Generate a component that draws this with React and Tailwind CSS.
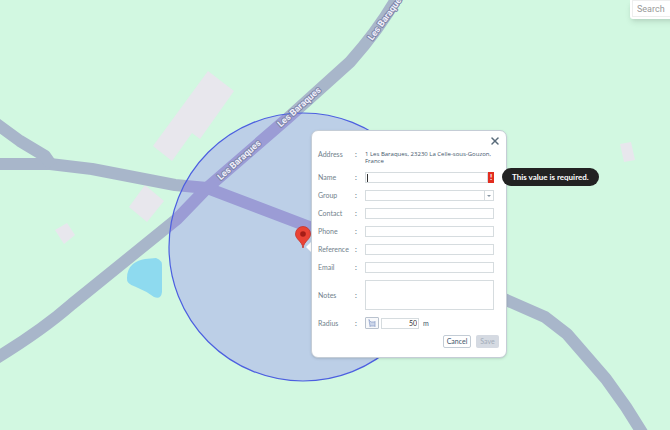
import React, { useState } from 'react';
import { X } from 'lucide-react';

const roads = [
    { d: 'M-10 164 H30 L50 164 L92 169 L175 185 L207 188 L320 231 C390 265 450 284 504 299 L545 317 L567 334 L606 379 L626 407 L648 442', width: 12 },
    { d: 'M-10 119 L20 141 L45 156 L52 166', width: 12 },
    { d: 'M-10 362 Q40 332 72 304 L177 219 L207 188 L289 117 L350 62 Q382 26 400 -8', width: 12 },
];

const buildings = [
    '208,71 234,91 200,139 192,133 172,161 153,146',
    '145,185 164,201 147,222 129,207',
    '67,223 75,235 64,244 55,230',
    '620,144 631,142 635,160 624,162',
];

const roadLabels = [
    { x: 239, y: 160, angle: -42 },
    { x: 299, y: 107, angle: -42 },
    { x: 386, y: 17, angle: -54 },
];

const MapCanvas = () => (
    <svg
        viewBox="0 0 670 430"
        preserveAspectRatio="xMidYMid slice"
        className="absolute inset-0 w-full h-full font-['Roboto',sans-serif]"
    >
        <rect width="670" height="430" fill="#d2f8e1" />
        {buildings.map((points) => (
            <polygon key={points} points={points} fill="#e8e7ed" />
        ))}
        {/* Pond */}
        <path d="M127 278 Q127 269 133 264 Q138 260 145 259 L156 258 Q163 260 162 268 L162 292 Q161 300 154 297 Q146 291 136 287 Q126 284 127 278 Z" fill="#8edaef" />
        {roads.map((road) => (
            <path key={road.d} d={road.d} fill="none" stroke="#a8b6ca" strokeWidth={road.width} strokeLinejoin="round" />
        ))}
        {/* Geofence */}
        <circle cx="303" cy="247" r="134" fill="#6e3eff" fillOpacity="0.22" stroke="#4c5fe0" strokeWidth="1.2" />
        {roadLabels.map(({ x, y, angle }) => (
            <text
                key={x}
                transform={`translate(${x} ${y}) rotate(${angle})`}
                textAnchor="middle"
                dominantBaseline="central"
                fontSize="9"
                fontWeight="700"
                fill="#f0effa"
                stroke="#7c84a8"
                strokeWidth="2"
                strokeLinejoin="round"
                paintOrder="stroke"
            >
                Les Baraques
            </text>
        ))}
        {/* Popup pointer */}
        <path d="M306 247 L313 240 V254 Z" fill="#fff" />
        {/* Pin */}
        <path d="M303 248 C302 241 295.500 239.500 295.500 234 A7.500 7.500 0 0 1 310.500 234 C310.500 239.500 304 241 303 248 Z" fill="#ea4335" stroke="#c5332b" strokeWidth="0.8" />
        <circle cx="303" cy="234" r="2.800" fill="#a51d16" />
    </svg>
);

const inputClass = 'block w-full h-[11px] border border-[#d6dcdf] bg-white px-[2px] text-[7px] text-gray-800 outline-none';

const Row = ({ label, id, children }) => (
    <div className="flex items-center">
        <label htmlFor={id} className="w-[37px] shrink-0 text-[#71818c]">{label}</label>
        <span className="w-[10px] shrink-0 font-bold text-[#71818c]">:</span>
        <div className="flex-1 min-w-0">{children}</div>
    </div>
);

const PlaceForm = () => {
    const [radius, setRadius] = useState('50');

    return (
        <form className="absolute left-[311px] top-[130px] w-[196px] rounded-[7px] border border-[#c5cdd6] bg-white pl-[6px] pr-[12px] pt-[4px] pb-[9px] shadow-sm font-['Lato',sans-serif] text-[7px] leading-[7px]">
            <div className="flex justify-end -mr-[7px]">
                <button type="button" aria-label="Close" className="text-[#596b7a]">
                    <X size={12} strokeWidth={3} />
                </button>
            </div>

            <div className="mt-[4px] flex flex-col gap-[7px]">
                <div className="flex">
                    <span className="w-[37px] shrink-0 text-[#71818c]">Address</span>
                    <span className="w-[10px] shrink-0 font-bold text-[#71818c]">:</span>
                    <p className="-mr-[4px] flex-1 font-['Open_Sans',sans-serif] text-[6px] font-medium text-[#42566b]">1 Les Baraques, 23230 La Celle-sous-Gouzon, France</p>
                </div>
                <Row label="Name" id="name">
                    <div className="flex h-[11px] items-stretch">
                        <div className="flex flex-1 items-center border border-[#d6dcdf] pl-[1px]">
                            <span className="h-[8px] w-px bg-[#333]" />
                            <input id="name" className="w-full h-[9px] outline-none" aria-invalid="true" />
                        </div>
                        <span className="w-[6px] bg-[#e22d1f] text-center text-[8px] font-bold leading-[11px] text-white">!</span>
                    </div>
                </Row>
                <Row label="Group" id="group">
                    <div className="relative">
                        <select id="group" className={`${inputClass} appearance-none`} />
                        <span className="pointer-events-none absolute inset-y-0 right-0 flex w-[10px] items-center justify-center border border-[#d6dcdf]">
                            <svg width="4" height="2" viewBox="0 0 4 2"><path d="M0 0H4L2 2Z" fill="#8796a3" /></svg>
                        </span>
                    </div>
                </Row>
                <Row label="Contact" id="contact"><input id="contact" className={inputClass} /></Row>
                <Row label="Phone" id="phone"><input id="phone" className={inputClass} /></Row>
                <Row label="Reference" id="reference"><input id="reference" className={inputClass} /></Row>
                <Row label="Email" id="email"><input id="email" className={inputClass} /></Row>
                <Row label="Notes" id="notes">
                    <textarea id="notes" className="block h-[30px] w-full resize-none border border-[#d6dcdf] p-[2px] outline-none" />
                </Row>
                <Row label="Radius" id="radius">
                    <div className="flex items-center gap-[2px]">
                        <button type="button" aria-label="Draw area" className="flex h-[12px] w-[14px] items-center justify-center rounded-[1px] border border-[#b9c2ce] bg-[#f8f9fb]">
                            <svg width="8" height="8" viewBox="0 0 8 8" fill="#ccd6ea" stroke="#93a4cc" strokeWidth="0.800">
                                <path d="M1 1L2 7H7V3H3Z" />
                                <path d="M0.500 0.500H1.500M6.500 2.500H7.500M1.500 7.500H2.500M6.500 7.500H7.500" />
                            </svg>
                        </button>
                        <input
                            id="radius"
                            value={radius}
                            onChange={(e) => setRadius(e.target.value)}
                            className="h-[11px] w-[38px] border border-[#d6dcdf] px-px text-right text-[7px] text-[#333] outline-none"
                        />
                        <span className="ml-[2px] text-[#42566b]">m</span>
                    </div>
                </Row>
            </div>

            <div className="-mr-[5px] mt-[6px] flex justify-end gap-[5px]">
                <button type="button" className="h-[13px] w-[28px] rounded-[2px] border border-[#c3ccd5] bg-white text-[#42566b]">Cancel</button>
                <button type="submit" disabled className="h-[13px] w-[23px] rounded-[2px] bg-[#d5dae2] text-[#a3adb9]">Save</button>
            </div>
        </form>
    );
};

const App = () => (
    <main className="relative h-screen w-full overflow-hidden bg-[#d2f8e1]">
        <MapCanvas />
        <div className="absolute -right-[80px] top-0 w-[120px] rounded-b-[3px] bg-white px-[2px] pb-[2px] shadow-md">
            <input
                type="search"
                aria-label="Search"
                placeholder="Search"
                className="block h-[17px] w-full border border-[#eeeeee] px-[4px] font-['Roboto',sans-serif] text-[9px] outline-none placeholder:text-[#999]"
            />
        </div>
        <PlaceForm />
        <div role="alert" className="absolute left-[502px] top-[168px] flex h-[18px] items-center rounded-full bg-[#222] px-[10px] font-['Lato',sans-serif] text-[8px] font-bold text-white">
            This value is required.
        </div>
    </main>
);

export default App;
